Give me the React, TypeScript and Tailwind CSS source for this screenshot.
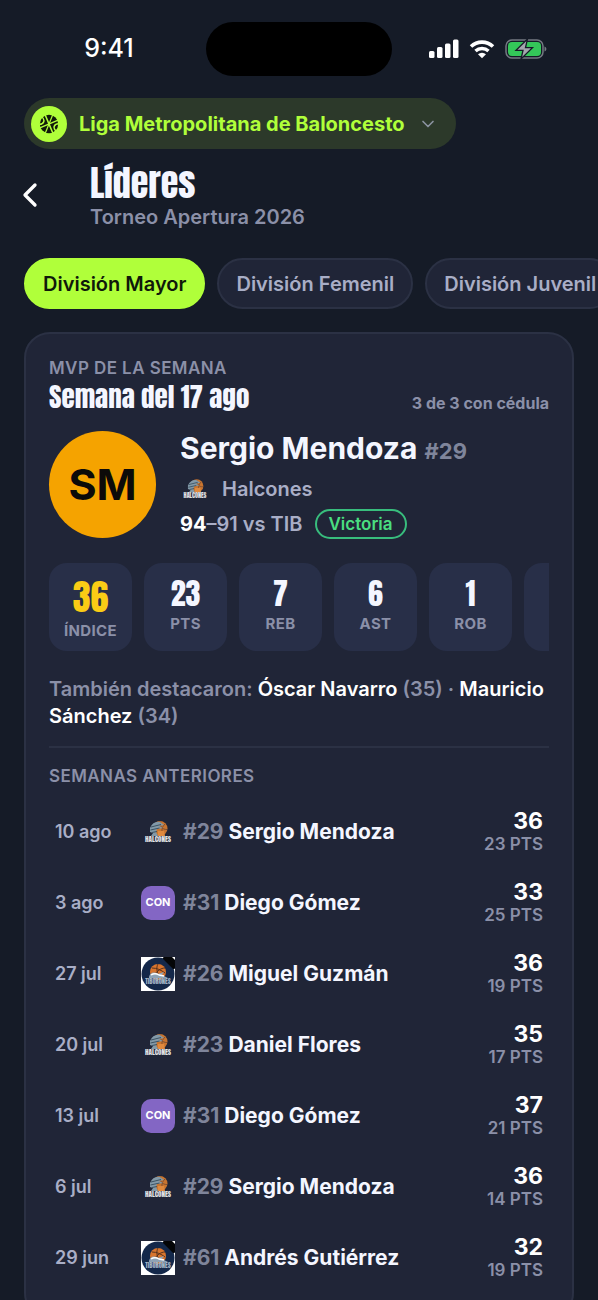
import { useState } from "react";
import { ChevronDown, ChevronLeft } from "lucide-react";

type Team = "halcones" | "condores" | "tiburones";

interface WeekRow {
  date: string;
  team: Team;
  number: number;
  name: string;
  index: number;
  points: number;
}

const DISPLAY = "font-['Anton','Impact',sans-serif]";

const divisions = ["División Mayor", "División Femenil", "División Juvenil"];

const stats = [
  { label: "ÍNDICE", value: "36", highlight: true },
  { label: "PTS", value: "23" },
  { label: "REB", value: "7" },
  { label: "AST", value: "6" },
  { label: "ROB", value: "1" },
  { label: "", value: "" },
];

const weeks: WeekRow[] = [
  { date: "10 ago", team: "halcones", number: 29, name: "Sergio Mendoza", index: 36, points: 23 },
  { date: "3 ago", team: "condores", number: 31, name: "Diego Gómez", index: 33, points: 25 },
  { date: "27 jul", team: "tiburones", number: 26, name: "Miguel Guzmán", index: 36, points: 19 },
  { date: "20 jul", team: "halcones", number: 23, name: "Daniel Flores", index: 35, points: 17 },
  { date: "13 jul", team: "condores", number: 31, name: "Diego Gómez", index: 37, points: 21 },
  { date: "6 jul", team: "halcones", number: 29, name: "Sergio Mendoza", index: 36, points: 14 },
  { date: "29 jun", team: "tiburones", number: 61, name: "Andrés Gutiérrez", index: 32, points: 19 },
];

function HalconesLogo({ className }: { className: string }) {
  return (
    <svg viewBox="0 0 34 34" className={className} aria-hidden="true">
      <circle cx="19" cy="13.5" r="7.5" fill="#c9752f" />
      <path d="M19 6.5c0 5 2 8 7 8M24 9c-3 3-4 6-2 11" fill="none" stroke="#6b4530" strokeWidth="0.8" />
      <path d="M9 13c2-5 6-7 10-6l4 3-5 1 4 2-6 1-1 3 2 4H10l2-3-3-1z" fill="#8299a8" />
      <path d="M10 12l10-2.500M9.500 15l9-2M11 17.500l5-1" stroke="#3c5262" strokeWidth="1" />
      <path d="M17 16h6l1 5h-7z" fill="#e08a3e" />
      <text x="17" y="27" textAnchor="middle" fontFamily="Anton, sans-serif" fontSize="7" fill="#e2e2e4">
        HALCONES
      </text>
    </svg>
  );
}

function TiburonesLogo() {
  return (
    <svg viewBox="0 0 34 34" className="size-[34px]" aria-hidden="true">
      <path d="M0 0h34v34H0z" fill="#fff" />
      <circle cx="17" cy="17" r="16.500" fill="#14284a" />
      <path d="M22 0h9l3 3v9z" fill="#050608" />
      <path d="M23 0l11 11" stroke="#050608" strokeWidth="4" />
      <circle cx="17" cy="15" r="8" fill="#d8752e" />
      <path d="M11 11c5 0 9 2 13 5M17 7c-2 4-1 7 0 10M24 11c-4 0-8 3-10 6" stroke="#4a2b1c" strokeWidth="0.9" fill="none" />
      <path d="M8 21c0-5 5-7 9-4l6-2-2 3 6 3z" fill="#8fa3b5" />
      <path d="M10 18c3-2 5-2 8 0l5 1" stroke="#fff" strokeWidth="1.500" fill="none" />
      <text x="17" y="27" textAnchor="middle" fontFamily="Anton, sans-serif" fontSize="6.500" fill="#a3b4c6">
        TIBURONES
      </text>
    </svg>
  );
}

function TeamBadge({ team }: { team: Team }) {
  if (team === "condores") {
    return (
      <span className="flex size-[34px] items-center justify-center rounded-[10px] bg-[#8366c4] text-[11px] font-bold text-white">
        CON
      </span>
    );
  }
  return team === "halcones" ? <HalconesLogo className="size-[34px]" /> : <TiburonesLogo />;
}

function BasketballIcon() {
  return (
    <svg viewBox="0 0 20 20" className="size-5" aria-hidden="true">
      <circle cx="10" cy="10" r="9.200" fill="#10190a" />
      <g fill="none" stroke="#b0ff3a" strokeWidth="1.500" transform="rotate(22 10 10)">
        <path d="M3 3l14 14M17 3L3 17" />
        <path d="M10 0v20" strokeWidth="1.200" />
        <path d="M0.500 6c5 1.500 5 6.500 0 8M19.500 6c-5 1.500-5 6.500 0 8" />
      </g>
    </svg>
  );
}

function StatusBar() {
  return (
    <div className="grid h-[98px] shrink-0 grid-cols-[1fr_186px_1fr] items-center">
      <span className="pl-3 text-center text-[25px] font-medium text-white">9:41</span>
      <div className="h-[54px] rounded-full bg-black" />
      <div className="flex items-center justify-center gap-[10px] pr-[30px] pl-4">
        <svg viewBox="0 0 30 20" className="h-5 w-[30px]" fill="#fff" aria-hidden="true">
          <rect x="0" y="12" width="5.500" height="7" rx="1.500" />
          <rect x="8" y="8" width="5.500" height="11" rx="1.500" />
          <rect x="16" y="4.500" width="5.500" height="14.500" rx="1.500" />
          <rect x="24" y="0.500" width="5.500" height="18.500" rx="1.500" />
        </svg>
        <svg viewBox="0 0 26 20" className="h-5 w-[26px]" aria-hidden="true">
          <path d="M2 7.500a16 16 0 0 1 22 0" fill="none" stroke="#fff" strokeWidth="3.600" />
          <path d="M6.500 12a9.500 9.500 0 0 1 13 0" fill="none" stroke="#fff" strokeWidth="3.400" />
          <path d="M9 15.300a6 6 0 0 1 8 0L13 19.300z" fill="#fff" />
        </svg>
        <svg viewBox="0 0 42 22" className="h-[22px] w-[42px]" aria-hidden="true">
          <rect x="1" y="2" width="37" height="18" rx="6" fill="none" stroke="#747982" strokeWidth="1.500" />
          <rect x="3" y="4" width="33" height="14" rx="4" fill="#34c759" />
          <path d="M39.500 8.500c2.500 1 2.500 4 0 5z" fill="#747982" />
          <path d="M22.500 1L11 12.300h7L16 21 27.500 9.700h-7z" fill="#a3a6ad" stroke="#151b27" strokeWidth="1.300" />
        </svg>
      </div>
    </div>
  );
}

function StatTile({ label, value, highlight }: { label: string; value: string; highlight?: boolean }) {
  return (
    <div className="flex h-[88px] w-[83px] shrink-0 flex-col items-center rounded-[18px] bg-[#282f48] pt-3">
      <span
        className={`${DISPLAY} ${
          highlight ? "text-4xl leading-[45px] text-[#facc15]" : "text-3xl leading-[38px] text-[#f4f6ff]"
        }`}
      >
        {value}
      </span>
      <span className="text-[15px] leading-[22px] font-bold tracking-wide text-[#8b90a8]">{label}</span>
    </div>
  );
}

function MvpCard() {
  return (
    <section className="mx-6 rounded-[26px] border-2 border-[#2b3144] bg-[#202537] px-[23px] pt-[22px] pb-6">
      <div className="flex items-end justify-between">
        <div>
          <p className="text-[17px] leading-6 font-semibold tracking-wide text-[#8b90a8]">MVP DE LA SEMANA</p>
          <h2 className={`${DISPLAY} text-[27px] leading-[34px] text-[#f4f6ff]`}>Semana del 17 ago</h2>
        </div>
        <p className="text-base leading-[22px] font-bold text-[#8b90a8]">3 de 3 con cédula</p>
      </div>

      <div className="mt-4 flex items-center gap-6">
        <div className="flex size-[107px] shrink-0 items-center justify-center rounded-full bg-[#f5a300] text-[43px] font-bold text-[#0c0a09]">
          SM
        </div>
        <div>
          <h3 className="text-3xl leading-9 font-bold text-[#f4f6ff]">
            Sergio Mendoza <span className="text-[22px] text-[#7f859b]">#29</span>
          </h3>
          <p className="mt-1 flex items-center gap-3 text-xl leading-8 font-semibold text-[#a9aec6]">
            <HalconesLogo className="size-[30px]" />
            Halcones
          </p>
          <p className="mt-1 flex items-center gap-3 text-xl leading-[30px] font-semibold text-[#a9aec6]">
            <span>
              <b className="font-bold text-white">94</b>–91 vs TIB
            </span>
            <span className="rounded-full border-2 border-[#38bd7d] px-3 text-[17px] leading-[26px] font-semibold text-[#4ade80]">
              Victoria
            </span>
          </p>
        </div>
      </div>

      <div className="mt-6 flex gap-3 overflow-hidden">
        {stats.map((stat, i) => (
          <StatTile key={i} {...stat} />
        ))}
      </div>

      <p className="mt-[25px] text-xl leading-[27px] font-semibold text-[#8b90a8]">
        También destacaron: <b className="font-semibold text-white">Óscar Navarro</b> (35) ·{" "}
        <b className="font-semibold text-white">Mauricio Sánchez</b> (34)
      </p>

      <hr className="mt-4 border-t-2 border-[#2b3144]" />

      <h4 className="mt-4 text-[17px] leading-6 font-semibold tracking-wide text-[#8b90a8]">SEMANAS ANTERIORES</h4>
      <ul className="mt-2">
        {weeks.map((week) => (
          <li key={week.date} className="flex h-[71px] items-center px-[6px]">
            <span className="w-[86px] shrink-0 text-lg font-semibold text-[#a9aec6]">{week.date}</span>
            <TeamBadge team={week.team} />
            <p className="ml-2 flex-1 text-[21px] font-bold text-[#f4f6ff]">
              <span className="text-[#7f859b]">#{week.number}</span> {week.name}
            </p>
            <div className="text-right">
              <p className="text-[23px] leading-6 font-bold text-white">{week.index}</p>
              <p className="text-[17px] leading-[22px] font-semibold text-[#8b90a8]">{week.points} PTS</p>
            </div>
          </li>
        ))}
      </ul>
    </section>
  );
}

export default function App() {
  const [active, setActive] = useState(divisions[0]);

  return (
    <div className="flex h-screen flex-col overflow-hidden bg-[#151b27] font-['Inter',sans-serif]">
      <StatusBar />

      <main className="min-h-0 flex-1 overflow-x-hidden overflow-y-auto [scrollbar-width:none]">
        <button className="ml-6 flex h-[51px] items-center rounded-full bg-[#2c392a] pr-[18px] pl-[7px] text-xl font-bold text-[#b0ff3a]">
          <span className="mr-3 flex size-9 items-center justify-center rounded-full bg-[#b0ff3a]">
            <BasketballIcon />
          </span>
          Liga Metropolitana de Baloncesto
          <ChevronDown className="ml-[13px] size-5 text-[#8b93a0]" strokeWidth={2} />
        </button>

        <header className="mt-3 flex items-center">
          <button aria-label="Volver" className="ml-3 flex size-9 items-center justify-center text-white">
            <ChevronLeft className="size-10 shrink-0" strokeWidth={2} />
          </button>
          <div className="ml-[42px]">
            <h1 className={`${DISPLAY} text-4xl leading-[44px] text-[#f4f6ff]`}>Líderes</h1>
            <p className="text-xl leading-6 font-semibold text-[#8b90a8]">Torneo Apertura 2026</p>
          </div>
        </header>

        <nav className="mt-[29px] flex gap-3 overflow-hidden pl-6">
          {divisions.map((division) => (
            <button
              key={division}
              onClick={() => setActive(division)}
              className={`h-[51px] shrink-0 rounded-full border-2 px-[17px] text-xl font-semibold ${
                division === active
                  ? "border-[#b0ff3a] bg-[#b0ff3a] text-[#10190a]"
                  : "border-[#2b3144] bg-[#202537] text-[#a9aec6]"
              }`}
            >
              {division}
            </button>
          ))}
        </nav>

        <div className="mt-[23px] pb-6">
          <MvpCard />
        </div>
      </main>
    </div>
  );
}
